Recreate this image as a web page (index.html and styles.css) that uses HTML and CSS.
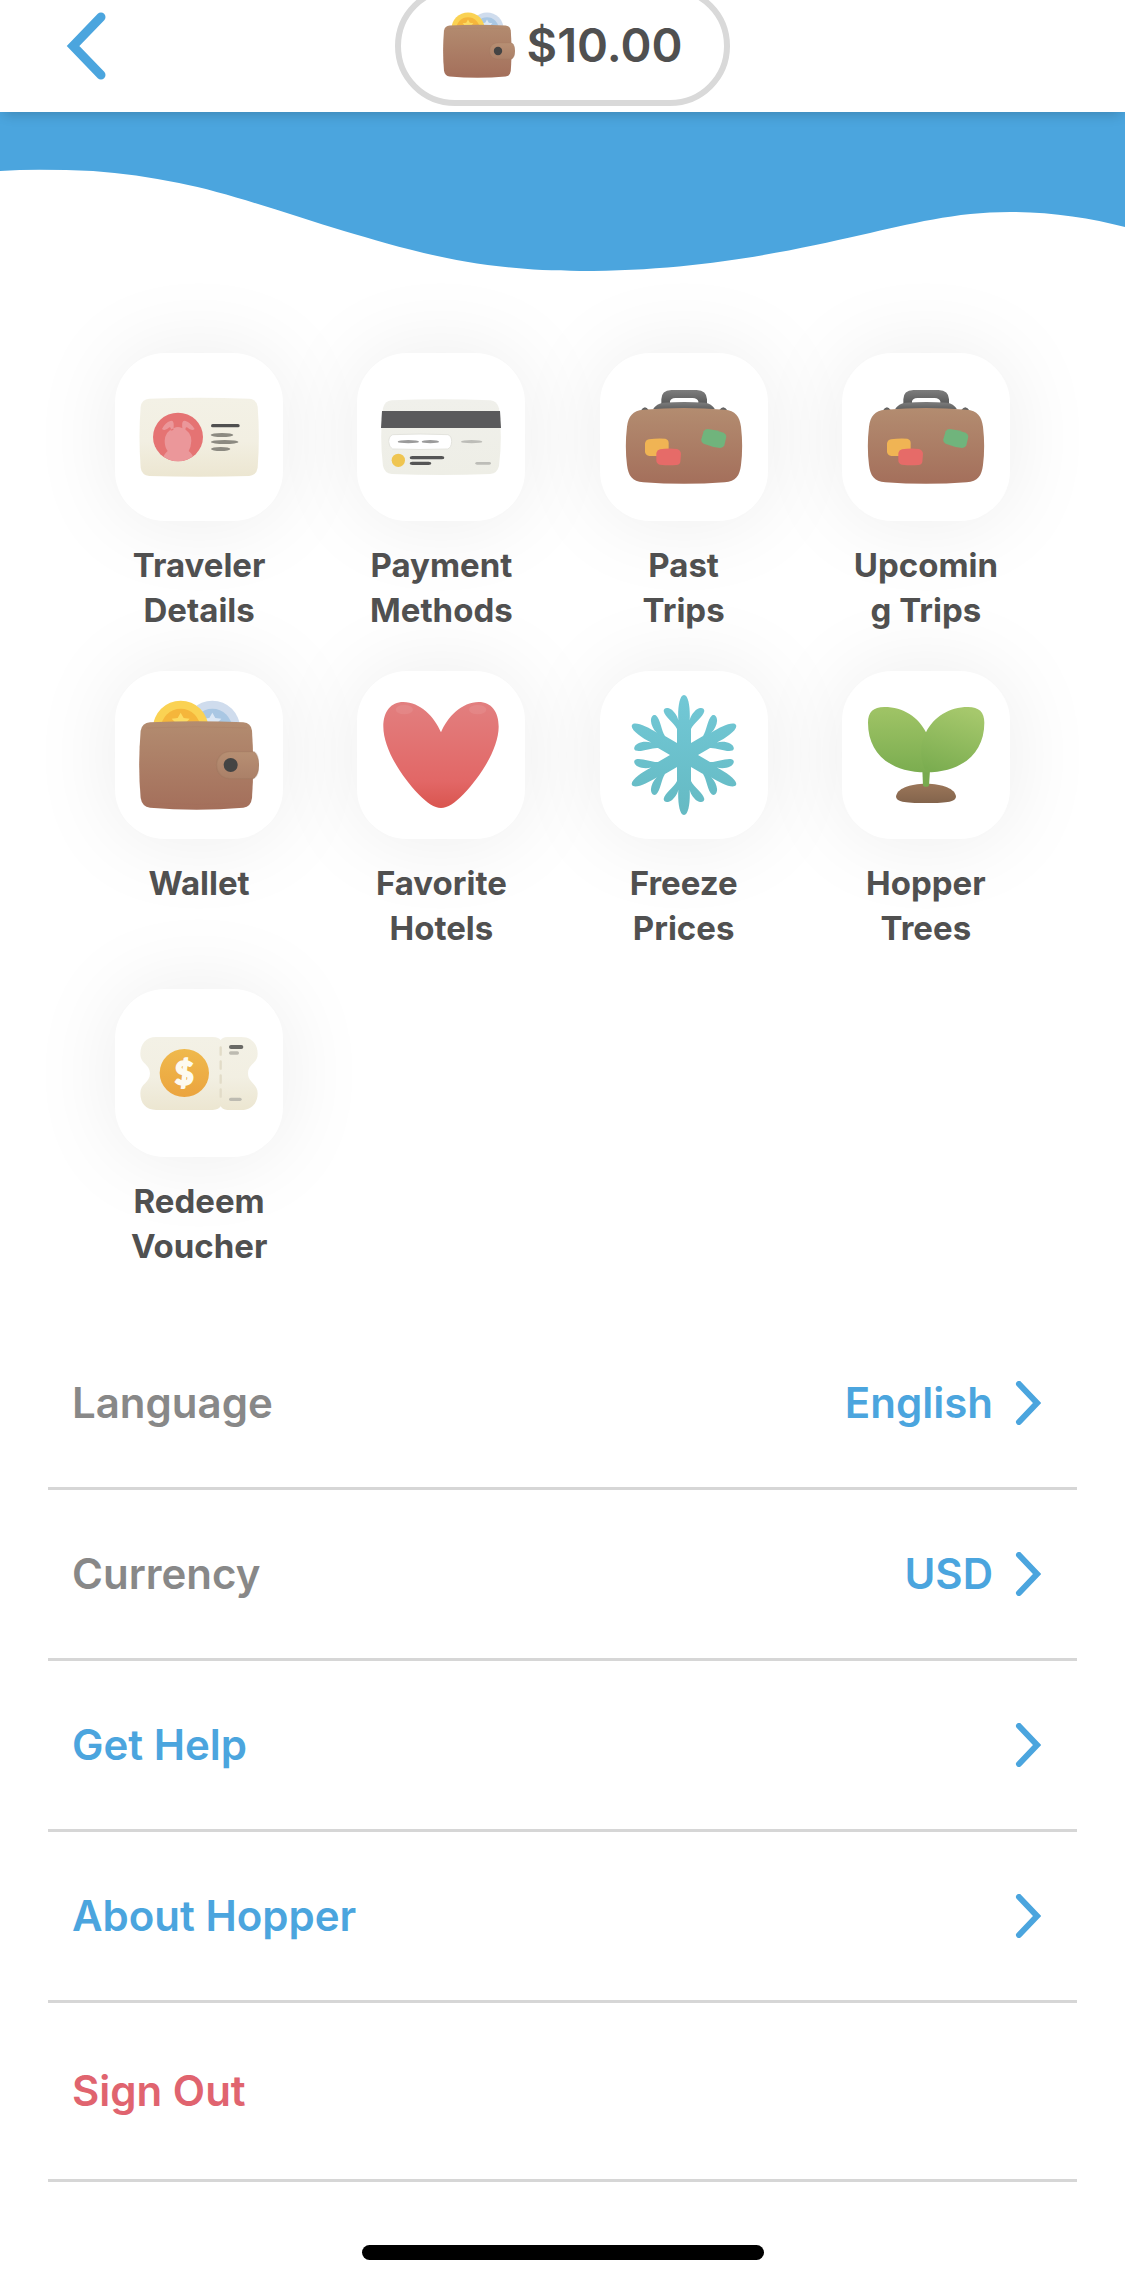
FILE: index.html
```html
<!DOCTYPE html>
<html lang="en">
<head>
<meta charset="utf-8">
<meta name="viewport" content="width=device-width, initial-scale=1">
<title>Account</title>
<link rel="stylesheet" href="styles.css">
</head>
<body>
<svg class="defs" aria-hidden="true">
  <defs>
    <linearGradient id="leather" x1="0" y1="0" x2="0" y2="1"><stop offset="0" stop-color="#b38c70"/><stop offset="1" stop-color="#a46f5b"/></linearGradient>
    <linearGradient id="strap" x1="0" y1="0" x2="0" y2="1"><stop offset="0" stop-color="#b78f73"/><stop offset="1" stop-color="#ab8068"/></linearGradient>
    <linearGradient id="cream" x1="0" y1="0" x2="0" y2="1"><stop offset="0" stop-color="#f3f1e6"/><stop offset=".55" stop-color="#f2efe2"/><stop offset="1" stop-color="#ece6d1"/></linearGradient>
    <linearGradient id="card" x1="0" y1="0" x2="0" y2="1"><stop offset="0" stop-color="#f0f0eb"/><stop offset="1" stop-color="#eeeee6"/></linearGradient>
    <linearGradient id="metal" x1="0" y1="0" x2="0" y2="1"><stop offset="0" stop-color="#7d7d7d"/><stop offset="1" stop-color="#5a5a5a"/></linearGradient>
    <linearGradient id="heart" x1="0" y1="0" x2="0" y2="1"><stop offset="0" stop-color="#e27f7f"/><stop offset=".75" stop-color="#e26766"/><stop offset="1" stop-color="#d9554f"/></linearGradient>
    <linearGradient id="ice" gradientUnits="userSpaceOnUse" x1="0" y1="105" x2="0" y2="465"><stop offset="0" stop-color="#72c8d6"/><stop offset="1" stop-color="#65bac3"/></linearGradient>
    <linearGradient id="leaf" x1="0" y1="0" x2="0" y2="1"><stop offset="0" stop-color="#a0c466"/><stop offset="1" stop-color="#7bad50"/></linearGradient>
    <linearGradient id="leafFront" x1=".6" y1="0" x2=".3" y2="1"><stop offset="0" stop-color="#a6c86c"/><stop offset="1" stop-color="#7bad50"/></linearGradient>
    <linearGradient id="soil" x1="0" y1="0" x2="0" y2="1"><stop offset="0" stop-color="#9b7659"/><stop offset="1" stop-color="#83644c"/></linearGradient>
    <linearGradient id="coin" x1="0" y1="0" x2="0" y2="1"><stop offset="0" stop-color="#efb94c"/><stop offset="1" stop-color="#eba43f"/></linearGradient>
    <clipPath id="badge"><circle cx="234" cy="291" r="73"/></clipPath>
    <clipPath id="pocket"><rect x="117" y="110" width="360" height="80"/></clipPath>
    <symbol id="wallet" viewBox="117 120 360 330">
      <g clip-path="url(#pocket)">
        <circle cx="337" cy="205" r="83" fill="#cfdced"/><circle cx="337" cy="205" r="59" fill="#a9c7e3"/>
        <path d="M337 158l9 16 18 2-13 14h-28l-13-14 18-2z" fill="#dce8f5"/>
        <circle cx="242" cy="205" r="83" fill="#fad253"/><circle cx="242" cy="205" r="59" fill="#f5b63b"/>
        <path d="M242 158l9 16 18 2-13 14h-28l-13-14 18-2z" fill="#fcdb62"/>
      </g>
      <path d="M150 187Q290 181 430 187Q453 189 456 212Q463 315 456 414Q453 440 430 443Q290 455 150 443Q126 440 122 414Q113 315 122 212Q126 189 150 187z" fill="url(#leather)"/>
      <path d="M138 204Q290 196 440 204M138 429Q290 438 440 429" fill="none" stroke="#9b7059" stroke-opacity=".25" stroke-width="2"/>
      <path d="M388 275H462Q476 284 477 315Q476 348 460 356H388C337 352 337 279 388 275z" fill="url(#strap)" stroke="#956f58" stroke-opacity=".25" stroke-width="4"/>
      <circle cx="392" cy="315" r="21" fill="#444"/>
    </symbol>
    <symbol id="suitcase" viewBox="60 39 504 504">
      <path d="M244 192V178Q244 151 274 150H350Q380 151 381 178V192H355V184Q352 175 338 174H286Q272 175 270 184V192z" fill="url(#metal)"/>
      <path d="M219 208Q230 190 250 188Q312 184 376 188Q394 190 405 208zM182 212Q194 192 206 210zM418 210Q431 192 443 212z" fill="url(#metal)"/>
      <path d="M190 209Q312 199 434 209C466 212 479 228 483 260Q490 320 483 375C479 407 468 424 434 427Q312 436 190 427C156 424 145 407 141 375Q134 320 141 260C145 228 158 212 190 209z" fill="url(#leather)"/>
      <path d="M207 298Q231 294 256 296Q266 299 266 309V336Q264 348 253 348H208Q197 346 195 336V310Q197 300 207 298z" fill="#f0b454"/>
      <path d="M240 328Q265 324 291 327Q302 330 303 341L301 366Q299 375 289 375Q264 377 240 374Q230 371 229 362V339Q231 330 240 328z" fill="#e66b68"/>
      <path d="M383 267Q406 269 431 278Q439 282 439 290L433 316Q430 324 421 324Q396 321 371 311Q363 307 364 298L371 274Q375 267 383 267z" fill="#70b47c"/>
    </symbol>
  </defs>
</svg>

<div class="page">
  <header class="topbar">
    <button class="back" type="button" aria-label="Back">
      <svg width="40" height="68" viewBox="0 0 40 68"><path d="M35 5L7 34L35 63" fill="none" stroke="#4ba5de" stroke-width="9" stroke-linecap="round"/></svg>
    </button>
    <a class="balance" href="#wallet">
      <svg width="72" height="66" aria-hidden="true"><use href="#wallet"/></svg>
      <span>$10.00</span>
    </a>
  </header>

  <svg class="wave" viewBox="0 112 1125 160" preserveAspectRatio="none" aria-hidden="true">
    <path d="M0 112V171C31 169 62 170 93 171C122 173 150 177 179 183C230 193 290 215 344 231C400 247 470 271 580 271C700 271 790 251 861 235C910 224 955 212 1010 212C1050 212 1090 218 1125 227V112z" fill="#4ba5de"/>
  </svg>

  <main>
    <nav class="shortcuts" aria-label="Account">
      <a class="shortcut" href="#traveler">
        <span class="tile"><svg viewBox="45 39 504 504">
          <path d="M148 176Q297 171 447 176Q470 178 473 200Q480 291 473 383Q470 405 447 408Q297 413 148 408Q125 405 122 383Q115 291 122 200Q125 178 148 176z" fill="url(#cream)"/>
          <ellipse cx="234" cy="291" rx="75" ry="73" fill="#e57373"/>
          <path clip-path="url(#badge)" d="M222 264Q233 258 246 264Q274 274 274 303Q273 322 266 333Q280 344 286 365H184Q190 344 203 333Q194 321 194 303Q195 274 222 264zM220 270Q225 238 211 243Q196 247 186 267Q195 275 208 262Q214 261 212 272zM248 270Q242 238 257 243Q271 247 284 267Q275 275 261 262Q255 261 257 272z" fill="#eb979a"/>
          <g fill="#8c8a81"><ellipse cx="366" cy="285" rx="34" ry="6"/><ellipse cx="374" cy="306" rx="41" ry="6"/><ellipse cx="362" cy="327" rx="29" ry="6"/></g>
          <rect x="333" y="252" width="86" height="10" rx="5" ry="5" fill="#4f4f4f"/>
        </svg></span>
        <span class="caption">Traveler Details</span>
      </a>
      <a class="shortcut" href="#payment">
        <span class="tile"><svg viewBox="771 39 504 504">
          <path d="M875 181Q1022 175 1171 181Q1191 183 1197 205Q1208 290 1197 378Q1192 400 1171 402Q1022 408 875 402Q854 400 849 378Q838 290 849 205Q854 183 875 181z" fill="url(#card)"/>
          <path d="M846 213H1200L1203 264H843z" fill="#5a5a5c"/>
          <path d="M878 284Q960 280 1044 284Q1055 288 1055 305Q1054 323 1043 327Q960 330 878 327Q867 322 866 305Q867 288 878 284z" fill="#fff" stroke="#e4e4de" stroke-width="3"/>
          <g fill="#9b9b9b"><ellipse cx="925" cy="305" rx="32" ry="5"/><ellipse cx="991" cy="305" rx="26" ry="5"/></g>
          <g fill="#bdbdb8"><ellipse cx="1115" cy="305" rx="32" ry="5"/><rect x="1126" y="366" width="47" height="8" rx="5" ry="4"/></g>
          <circle cx="895" cy="361" r="20" fill="#efc551"/>
          <rect x="929" y="348" width="104" height="10" rx="8" ry="5" fill="#555"/><rect x="929" y="365" width="65" height="10" rx="8" ry="5" fill="#555"/>
        </svg></span>
        <span class="caption">Payment Methods</span>
      </a>
      <a class="shortcut" href="#past">
        <span class="tile"><svg><use href="#suitcase"/></svg></span>
        <span class="caption">Past Trips</span>
      </a>
      <a class="shortcut" href="#upcoming">
        <span class="tile"><svg><use href="#suitcase"/></svg></span>
        <span class="caption">Upcoming Trips</span>
      </a>
      <a class="shortcut" href="#wallet">
        <span class="tile"><svg viewBox="45 33 504 504"><use href="#wallet" x="117" y="120" width="360" height="330"/></svg></span>
        <span class="caption">Wallet</span>
      </a>
      <a class="shortcut" href="#hotels">
        <span class="tile"><svg viewBox="771 33 504 504">
          <path d="M1023 217C1003 170 960 126 910 126C872 126 850 155 850 200C850 262 900 345 955 402C982 430 1003 444 1023 444S1064 430 1091 402C1146 345 1196 262 1196 200C1196 155 1174 126 1136 126C1086 126 1043 170 1023 217z" fill="url(#heart)"/>
          <ellipse cx="913" cy="149" rx="26" ry="14" fill="#fff" opacity=".08"/><ellipse cx="1133" cy="149" rx="26" ry="14" fill="#fff" opacity=".08"/>
        </svg></span>
        <span class="caption">Favorite Hotels</span>
      </a>
      <a class="shortcut" href="#freeze">
        <span class="tile"><svg viewBox="60 33 504 504">
          <defs>
            <path id="arm" d="M291 285V207C283 190 254 170 251 153C251 142 264 142 273 148C282 154 292 167 295 181C293 150 297 105 312 105S331 150 329 181C332 167 342 154 351 148C360 142 373 142 373 153C370 170 341 190 333 207V285z"/>
            <clipPath id="flake"><use href="#arm"/><use href="#arm" transform="rotate(60 312 285)"/><use href="#arm" transform="rotate(120 312 285)"/><use href="#arm" transform="rotate(180 312 285)"/><use href="#arm" transform="rotate(240 312 285)"/><use href="#arm" transform="rotate(300 312 285)"/></clipPath>
          </defs>
          <rect x="140" y="100" width="344" height="370" fill="url(#ice)" clip-path="url(#flake)"/>
        </svg></span>
        <span class="caption">Freeze Prices</span>
      </a>
      <a class="shortcut" href="#trees">
        <span class="tile"><svg viewBox="786 33 504 504">
          <path d="M948 410C950 386 988 371 1038 371S1126 386 1128 410C1126 424 1108 429 1038 429S950 424 948 410z" fill="url(#soil)"/>
          <path d="M1027 330H1050L1047 377Q1038 384 1029 377z" fill="#78aa4e"/>
          <path d="M1038 217C1016 172 970 141 913 141C880 141 864 156 864 188C864 280 930 337 1038 337C1080 337 1080 260 1038 217z" fill="url(#leaf)"/>
          <path d="M1038 217C1060 172 1107 141 1164 141C1197 141 1213 156 1213 188C1213 280 1146 337 1038 337Q1008 270 1038 217z" fill="url(#leafFront)"/>
        </svg></span>
        <span class="caption">Hopper Trees</span>
      </a>
      <a class="shortcut" href="#voucher">
        <span class="tile"><svg viewBox="225 87 504 504">
          <path d="M348 231H518Q538 232 542 241Q546 232 562 231H604C634 231 653 252 653 281C653 312 624 311 624 340S653 370 653 400C653 430 634 450 604 450H562Q546 448 542 439Q538 448 518 450H348C318 450 301 430 301 400C301 370 330 369 330 340S301 312 301 281C301 252 318 231 348 231z" fill="url(#cream)"/>
          <path d="M542 262V424" stroke="#e2dcc8" stroke-width="7" stroke-dasharray="22 20" stroke-linecap="round"/>
          <ellipse cx="433" cy="339" rx="74" ry="72" fill="url(#coin)"/>
          <text class="coin-sign" x="433" y="374" text-anchor="middle">$</text>
          <rect x="567" y="255" width="43" height="12" rx="6" fill="#6a6a66"/><rect x="567" y="274" width="30" height="10" rx="5" fill="#bdbbb1"/><rect x="567" y="413" width="38" height="10" rx="5" fill="#bdbbb1"/>
        </svg></span>
        <span class="caption">Redeem Voucher</span>
      </a>
    </nav>

    <ul class="settings">
      <li><a class="row" href="#language"><span class="name">Language</span><span class="value">English</span><svg class="chevron" viewBox="0 0 26 44"><path d="M4 3L22 22L4 41"/></svg></a></li>
      <li><a class="row" href="#currency"><span class="name">Currency</span><span class="value">USD</span><svg class="chevron" viewBox="0 0 26 44"><path d="M4 3L22 22L4 41"/></svg></a></li>
      <li><a class="row action" href="#help"><span class="name">Get Help</span><svg class="chevron" viewBox="0 0 26 44"><path d="M4 3L22 22L4 41"/></svg></a></li>
      <li><a class="row action" href="#about"><span class="name">About Hopper</span><svg class="chevron" viewBox="0 0 26 44"><path d="M4 3L22 22L4 41"/></svg></a></li>
      <li><button class="row danger" type="button"><span class="name">Sign Out</span></button></li>
    </ul>
  </main>
  <div class="home-indicator"></div>
</div>
</body>
</html>
```
FILE: styles.css
```css
* { box-sizing: border-box; }

body {
  margin: 0;
  background: #fff;
  color: #505050;
  font-family: Inter, "Open Sans", sans-serif;
}

a { color: inherit; text-decoration: none; }

button {
  padding: 0;
  border: 0;
  background: none;
  font: inherit;
  text-align: left;
  cursor: pointer;
}

svg { display: block; }

.defs { position: absolute; width: 0; height: 0; }

.page { display: flex; flex-direction: column; }

/* The bar is scrolled slightly past the top edge */
.topbar {
  position: relative;
  display: grid;
  grid-template-columns: 1fr auto 1fr;
  align-items: center;
  margin-top: -14px;
  padding: 0 66px 6px;
  background: #fff;
  box-shadow: 0 6px 12px -4px rgba(0, 0, 0, .2);
}

.back { justify-self: start; }

.balance {
  display: flex;
  align-items: center;
  gap: 12px;
  height: 120px;
  padding: 0 42px 2px;
  border: 6px solid #d9d9d9;
  border-radius: 60px;
  font-size: 47px;
  line-height: 60px;
  font-weight: 600;
}

.wave { width: 100%; height: 160px; }

.shortcuts {
  display: grid;
  grid-template-columns: repeat(4, 1fr);
  gap: 38px 0;
  padding: 81px 78px 0;
}

.shortcut {
  display: flex;
  flex-direction: column;
  align-items: center;
  gap: 22px;
}

.tile {
  width: 168px;
  height: 168px;
  border-radius: 50px;
  background: #fff;
  box-shadow: 0 0 90px rgba(0, 0, 0, .08);
}

.tile svg { width: 100%; height: 100%; }

.caption {
  position: relative;
  width: 150px;
  font-size: 33px;
  line-height: 45px;
  font-weight: 700;
  text-align: center;
  overflow-wrap: anywhere;
}

.coin-sign {
  fill: #fdfaf0;
  stroke: #fdfaf0;
  stroke-width: 5px;
  font-family: Lato, sans-serif;
  font-size: 98px;
  font-weight: 900;
}

.settings {
  margin: 0;
  padding: 50px 48px 0;
  list-style: none;
}

.settings li { border-bottom: 3px solid #d6d6d6; }

.row {
  display: flex;
  align-items: center;
  gap: 22px;
  width: 100%;
  min-height: 168px;
  padding: 0 36px 0 24px;
  color: #888;
  font-size: 42px;
  line-height: 52px;
  font-weight: 600;
}

.name { flex: 1; }

.value, .action { color: #4ba5de; }

.danger { min-height: 176px; color: #e0646f; }

.chevron {
  width: 26px;
  height: 44px;
  fill: none;
  stroke: #4ba5de;
  stroke-width: 6px;
  stroke-linecap: round;
}

.home-indicator {
  width: 402px;
  height: 15px;
  margin: 63px auto 24px;
  border-radius: 8px;
  background: #000;
}
```
